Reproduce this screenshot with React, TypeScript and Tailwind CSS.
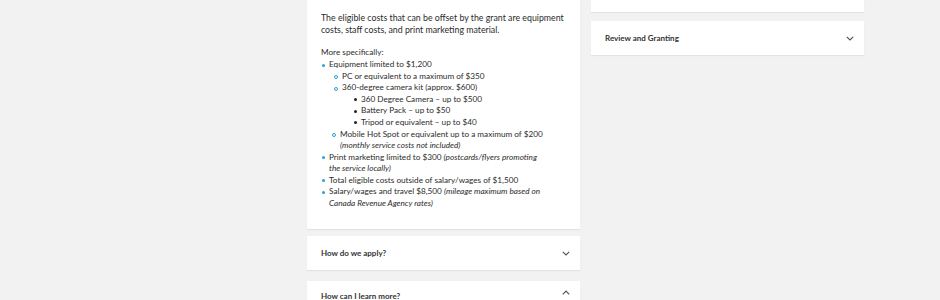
import React from "react";

const Chevron = ({ up = false }: { up?: boolean }) => (
  <svg width="8" height="5" viewBox="0 0 8 5" className="shrink-0">
    <path
      d={up ? "M0.8 4.3 L4 1 L7.2 4.3" : "M0.8 0.8 L4 4 L7.2 0.8"}
      fill="none"
      stroke="#555"
      strokeWidth="1.2"
    />
  </svg>
);

const Dot = () => (
  <span className="mt-[4.5px] mr-[4px] block h-[3px] w-[3px] shrink-0 rounded-full bg-[#2ba1d6]" />
);
const Ring = () => (
  <span className="mt-[4.3px] mr-[4px] block h-[4px] w-[4px] shrink-0 rounded-full border border-[#2ba1d6]" />
);
const Square = () => (
  <span className="mt-[4.5px] mr-[4px] block h-[3px] w-[3px] shrink-0 rounded-full bg-[#222]" />
);

const Item = ({
  bullet,
  indent,
  children,
}: {
  bullet: React.ReactNode;
  indent: string;
  children: React.ReactNode;
}) => (
  <div className={`flex ${indent}`}>
    {bullet}
    <div>{children}</div>
  </div>
);

const Header = ({ title, up = false, className = "" }: { title: string; up?: boolean; className?: string }) => (
  <div className={`flex items-center justify-between bg-white pl-[14px] pr-[10px] shadow-[0_1px_1px_rgba(0,0,0,0.06)] ${className}`}>
    <span className="text-[8px] font-bold text-[#333]">{title}</span>
    <Chevron up={up} />
  </div>
);

export default function App() {
  return (
    <div
      className="h-[300px] w-[940px] overflow-hidden bg-[#f2f2f2] text-[#2b2b2b]"
      style={{ fontFamily: "Lato, 'Noto Sans', sans-serif" }}
    >
      <div className="ml-[307px] flex items-start gap-[11px]">
        <div className="flex w-[273px] flex-col">
          <div className="h-[229px] whitespace-nowrap bg-white pl-[14px] pr-[10px] pt-[12px] text-[8.2px] leading-[11.55px] shadow-[0_1px_1px_rgba(0,0,0,0.06)]">
            <p className="text-[8.8px]">
              The eligible costs that can be offset by the grant are equipment
              <br />
              costs, staff costs, and print marketing material.
            </p>
            <p className="mt-[11.6px] mb-[1px]">More specifically:</p>
            <Item bullet={<Dot />} indent="pl-[1px]">
              Equipment limited to $1,200
            </Item>
            <Item bullet={<Ring />} indent="pl-[13px]">
              PC or equivalent to a maximum of $350
            </Item>
            <Item bullet={<Ring />} indent="pl-[13px]">
              360-degree camera kit (approx. $600)
            </Item>
            <Item bullet={<Square />} indent="pl-[33px]">
              360 Degree Camera – up to $500
            </Item>
            <Item bullet={<Square />} indent="pl-[33px]">
              Battery Pack – up to $50
            </Item>
            <Item bullet={<Square />} indent="pl-[33px]">
              Tripod or equivalent – up to $40
            </Item>
            <Item bullet={<Ring />} indent="pl-[11px]">
              Mobile Hot Spot or equivalent up to a maximum of $200
              <br />
              <i>(monthly service costs not included)</i>
            </Item>
            <Item bullet={<Dot />} indent="pl-[1px]">
              Print marketing limited to $300 <i>(postcards/flyers promoting</i>
              <br />
              <i>the service locally)</i>
            </Item>
            <Item bullet={<Dot />} indent="pl-[1px]">
              Total eligible costs outside of salary/wages of $1,500
            </Item>
            <Item bullet={<Dot />} indent="pl-[1px]">
              Salary/wages and travel $8,500 <i>(mileage maximum based on</i>
              <br />
              <i>Canada Revenue Agency rates)</i>
            </Item>
          </div>
          <Header title="How do we apply?" className="mt-[7px] h-[34px]" />
          <Header title="How can I learn more?" up className="mt-[11px] h-[34px] items-start pt-[9px]" />
        </div>
        <div className="flex w-[273px] flex-col">
          <div className="h-[12px] bg-white shadow-[0_1px_1px_rgba(0,0,0,0.06)]" />
          <Header title="Review and Granting" className="mt-[9px] h-[34px]" />
        </div>
      </div>
    </div>
  );
}
